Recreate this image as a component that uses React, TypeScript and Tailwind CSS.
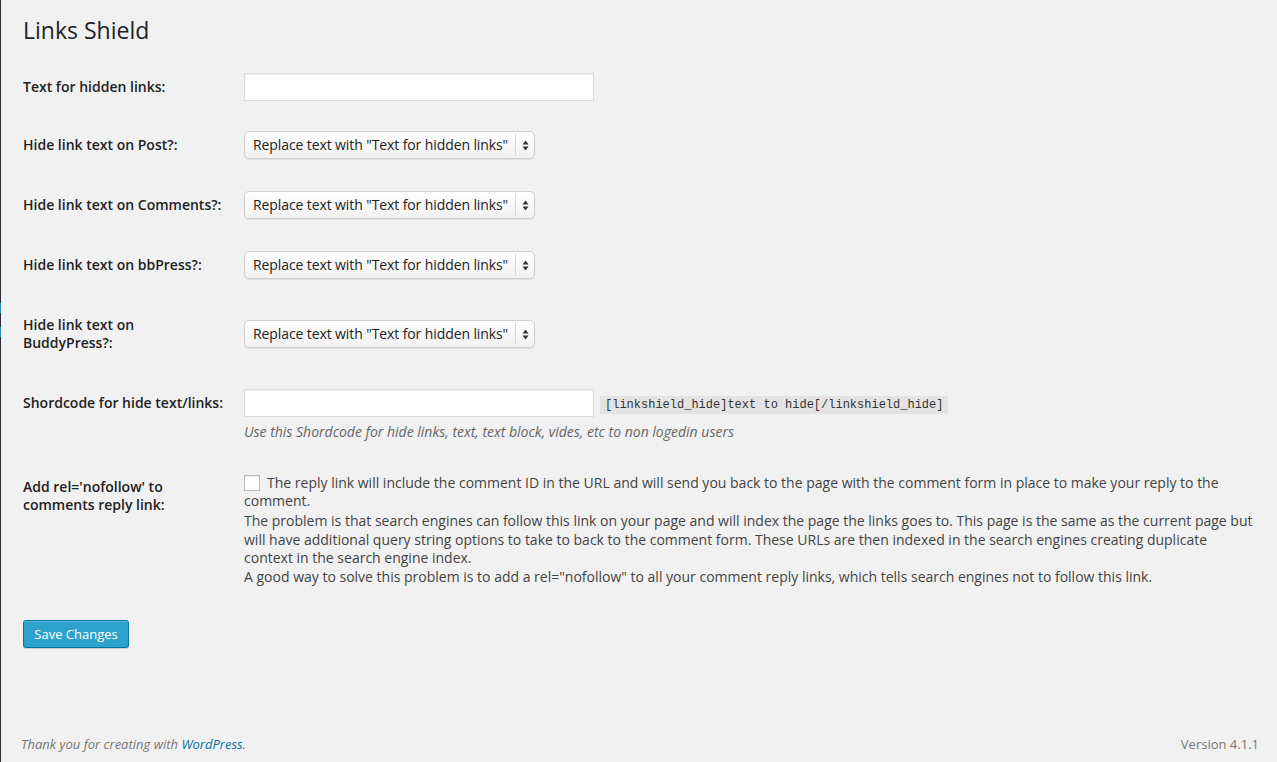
import React from "react";

function SelectBox() {
  return (
    <div className="flex h-[28px] w-[291px] items-center rounded-[5px] border border-[#cfcfcf] bg-gradient-to-b from-white to-[#f1f1f1] shadow-[0_1px_1px_rgba(0,0,0,0.08)]">
      <div className="flex-1 whitespace-nowrap pl-[8px] text-[14px] leading-[18px] tracking-[-0.1px] text-[#222]">
        Replace text with "Text for hidden links"
      </div>
      <div className="h-[22px] w-px bg-[#d8d8d8]" />
      <div className="flex w-[18px] items-center justify-center">
        <svg width="7" height="11" viewBox="0 0 7 11">
          <path d="M3.5 0.5 L6.5 4.5 L0.5 4.5 Z" fill="#333" />
          <path d="M3.5 10.5 L6.5 6.5 L0.5 6.5 Z" fill="#333" />
        </svg>
      </div>
    </div>
  );
}

function TextInput() {
  return (
    <div className="h-[28px] w-[350px] border border-[#dddddd] bg-white shadow-[inset_0_1px_2px_rgba(0,0,0,0.07)]" />
  );
}

const labelCls = "w-[221px] shrink-0 whitespace-nowrap text-[14px] font-semibold leading-[18px] text-[#222]";

export default function App() {
  return (
    <div
      className="flex h-[762px] w-full overflow-hidden bg-[#f1f1f1] text-[13px] text-[#444]"
      style={{ fontFamily: '"Open Sans", "Liberation Sans", sans-serif' }}
    >
      <div className="flex w-px shrink-0 flex-col">
        <div className="h-[303px] bg-[#2b2f33]" />
        <div className="h-[10px] bg-[#2a8fc4]" />
        <div className="h-[14px] bg-[#2b2f33]" />
        <div className="h-[10px] bg-[#2a8fc4]" />
        <div className="flex-1 bg-[#2b2f33]" />
      </div>
      <div className="flex flex-1 flex-col">
        <main className="pl-[22px] pr-[10px]">
          <h2 className="pt-[16px] text-[23px] font-normal leading-[29px] text-[#222]">Links Shield</h2>

          <div className="mt-[12px] flex flex-col">
            <div className="flex h-[58px] items-center pt-px">
              <div className={labelCls}>Text for hidden links:</div>
              <TextInput />
            </div>
            <div className="flex h-[60px] items-center">
              <div className={labelCls}>Hide link text on Post?:</div>
              <SelectBox />
            </div>
            <div className="flex h-[60px] items-center">
              <div className={labelCls}>Hide link text on Comments?:</div>
              <SelectBox />
            </div>
            <div className="flex h-[60px] items-center">
              <div className={labelCls}>Hide link text on bbPress?:</div>
              <SelectBox />
            </div>
            <div className="flex h-[78px] items-center">
              <div className={labelCls}>
                Hide link text on
                <br />
                BuddyPress?:
              </div>
              <SelectBox />
            </div>

            <div className="flex items-start">
              <div className={`${labelCls} pt-[21px]`}>Shordcode for hide text/links:</div>
              <div className="flex flex-col pt-[16px]">
                <div className="flex items-center">
                  <TextInput />
                  <code
                    className="ml-[6px] mt-[3px] bg-[#e3e3e3] px-[5px] text-[12px] leading-[18px] text-[#333]"
                    style={{ fontFamily: '"Liberation Mono", "DejaVu Sans Mono", monospace' }}
                  >
                    [linkshield_hide]text to hide[/linkshield_hide]
                  </code>
                </div>
                <p className="mt-[6px] text-[14px] italic leading-[18px] text-[#666]">
                  Use this Shordcode for hide links, text, text block, vides, etc to non logedin users
                </p>
              </div>
            </div>

            <div className="flex items-start">
              <div className={`${labelCls} pt-[37px]`}>
                Add rel='nofollow' to
                <br />
                comments reply link:
              </div>
              <div className="flex flex-col whitespace-nowrap pt-[31px] text-[14px]">
                <div className="leading-[18px]">
                  <span className="mr-[7px] inline-block h-[16px] w-[16px] translate-y-[3px] border border-[#bbbbbb] bg-white shadow-[inset_0_1px_2px_rgba(0,0,0,0.1)]" />
                  The reply link will include the comment ID in the URL and will send you back to the page with the comment form in place to make your reply to the
                  <br />
                  comment.
                </div>
                <div className="mt-[2px] leading-[18.5px]">
                  The problem is that search engines can follow this link on your page and will index the page the links goes to. This page is the same as the current page but
                  <br />
                  will have additional query string options to take to back to the comment form. These URLs are then indexed in the search engines creating duplicate
                  <br />
                  context in the search engine index.
                  <br />
                  A good way to solve this problem is to add a rel="nofollow" to all your comment reply links, which tells search engines not to follow this link.
                </div>
              </div>
            </div>
          </div>

          <button className="mt-[34px] flex h-[28px] w-[106px] items-center justify-center rounded-[3px] border border-[#0074a2] bg-[#2ea2cc] pb-px text-[13px] leading-[18px] text-white shadow-[inset_0_1px_0_rgba(120,200,230,0.5),0_1px_0_rgba(0,0,0,0.15)]">
            Save Changes
          </button>
        </main>

        <footer className="mt-auto flex items-center justify-between pb-[9px] pl-[20px] pr-[18px] leading-[18px] text-[#777]">
          <span className="italic">
            Thank you for creating with <span className="text-[#0074a2]">WordPress</span>.
          </span>
          <span>Version 4.1.1</span>
        </footer>
      </div>
    </div>
  );
}
